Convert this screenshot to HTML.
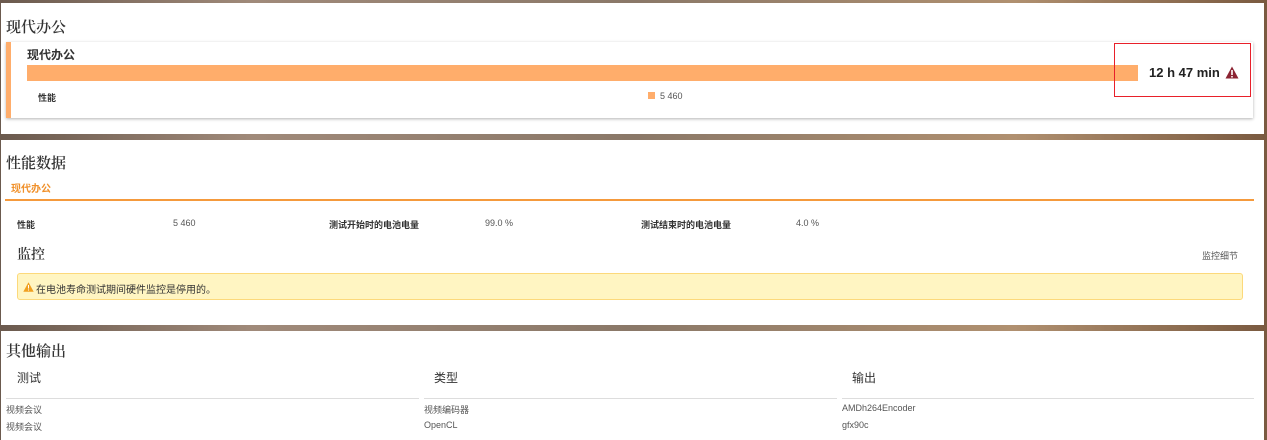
<!DOCTYPE html>
<html><head><meta charset="utf-8"><style>
*{margin:0;padding:0;box-sizing:border-box}
body{width:1267px;height:440px;overflow:hidden;background:#5a4a40;font-family:"Liberation Sans","Noto Sans CJK SC",sans-serif;position:relative;color:#222}
.strip{position:absolute;left:0;width:1267px;background:linear-gradient(90deg,#6b5a4e,#a08a7a 20%,#8a7868 50%,#b09070 80%,#7a5a40)}
.panel{position:absolute;left:1px;width:1263px;background:#fff}
.abs{position:absolute;white-space:nowrap}
.h{font-family:"Liberation Serif","Noto Serif CJK SC",serif;font-size:15px;color:#333;font-weight:600}
.s{font-size:9px;color:#555}
.b{font-size:9px;font-weight:bold;color:#333}
</style></head><body>
<div class="strip" style="top:0;height:440px"></div>
<div class="panel" style="top:3px;height:131px">
 <div class="abs h" style="left:5px;top:13px">现代办公</div>
 <div class="abs" style="left:5px;top:39px;width:1247px;height:76px;background:#fff;box-shadow:0 1px 3px rgba(0,0,0,.3);border-left:5px solid #ffad6b"></div>
 <div class="abs" style="left:26px;top:43px;font-size:12px;font-weight:bold;color:#333">现代办公</div>
 <div class="abs" style="left:26px;top:62px;width:1111px;height:16px;background:#ffad6b"></div>
 <div class="abs" style="left:1148px;top:62px;font-size:13px;font-weight:bold;color:#222">12 h 47 min</div>
 <svg class="abs" style="left:1224px;top:63px" width="14" height="13" viewBox="0 0 14 13"><path d="M7 0.5L13.5 12.5H0.5Z" fill="#8b2332"/><rect x="6.2" y="4" width="1.6" height="5" fill="#fff"/><rect x="6.2" y="10" width="1.6" height="1.5" fill="#fff"/></svg>
 <div class="abs" style="left:1113px;top:40px;width:137px;height:54px;border:1.5px solid #e8202a"></div>
 <div class="abs b" style="left:37px;top:88px">性能</div>
 <div class="abs" style="left:647px;top:89px;width:7px;height:7px;background:#ffad6b"></div>
 <div class="abs s" style="left:659px;top:88px">5 460</div>
</div>
<div class="panel" style="top:140px;height:185px">
 <div class="abs h" style="left:5px;top:12px">性能数据</div>
 <div class="abs" style="left:10px;top:40px;font-size:10px;font-weight:bold;color:#f0902a">现代办公</div>
 <div class="abs" style="left:4px;top:59px;width:1249px;height:2px;background:#f59a3c"></div>
 <div class="abs b" style="left:16px;top:78px">性能</div>
 <div class="abs s" style="left:172px;top:78px">5 460</div>
 <div class="abs b" style="left:328px;top:78px">测试开始时的电池电量</div>
 <div class="abs s" style="left:484px;top:78px">99.0 %</div>
 <div class="abs b" style="left:640px;top:78px">测试结束时的电池电量</div>
 <div class="abs s" style="left:795px;top:78px">4.0 %</div>
 <div class="abs h" style="left:16px;top:104px;font-size:14px">监控</div>
 <div class="abs s" style="left:1201px;top:109px">监控细节</div>
 <div class="abs" style="left:16px;top:133px;width:1226px;height:27px;background:#fff5c2;border:1px solid #fcd97b;border-radius:3px"></div>
 <svg class="abs" style="left:22px;top:142px" width="11" height="10" viewBox="0 0 11 10"><path d="M5.5 0.3L10.7 9.7H0.3Z" fill="#f0a020"/><rect x="5" y="3" width="1" height="3.5" fill="#fff"/><rect x="5" y="7.5" width="1" height="1" fill="#fff"/></svg>
 <div class="abs" style="left:35px;top:141px;font-size:10px;color:#333">在电池寿命测试期间硬件监控是停用的。</div>
</div>
<div class="panel" style="top:331px;height:109px">
 <div class="abs h" style="left:5px;top:9px">其他输出</div>
 <div class="abs" style="left:16px;top:38px;font-size:12px;color:#333">测试</div>
 <div class="abs" style="left:433px;top:38px;font-size:12px;color:#333">类型</div>
 <div class="abs" style="left:851px;top:38px;font-size:12px;color:#333">输出</div>
 <div class="abs" style="left:5px;top:67px;width:413px;height:1px;background:#ddd"></div>
 <div class="abs" style="left:423px;top:67px;width:413px;height:1px;background:#ddd"></div>
 <div class="abs" style="left:841px;top:67px;width:412px;height:1px;background:#ddd"></div>
 <div class="abs s" style="left:5px;top:72px">视频会议</div>
 <div class="abs s" style="left:423px;top:72px">视频编码器</div>
 <div class="abs s" style="left:841px;top:72px">AMDh264Encoder</div>
 <div class="abs s" style="left:5px;top:89px">视频会议</div>
 <div class="abs s" style="left:423px;top:89px">OpenCL</div>
 <div class="abs s" style="left:841px;top:89px">gfx90c</div>
</div>
</body></html>
